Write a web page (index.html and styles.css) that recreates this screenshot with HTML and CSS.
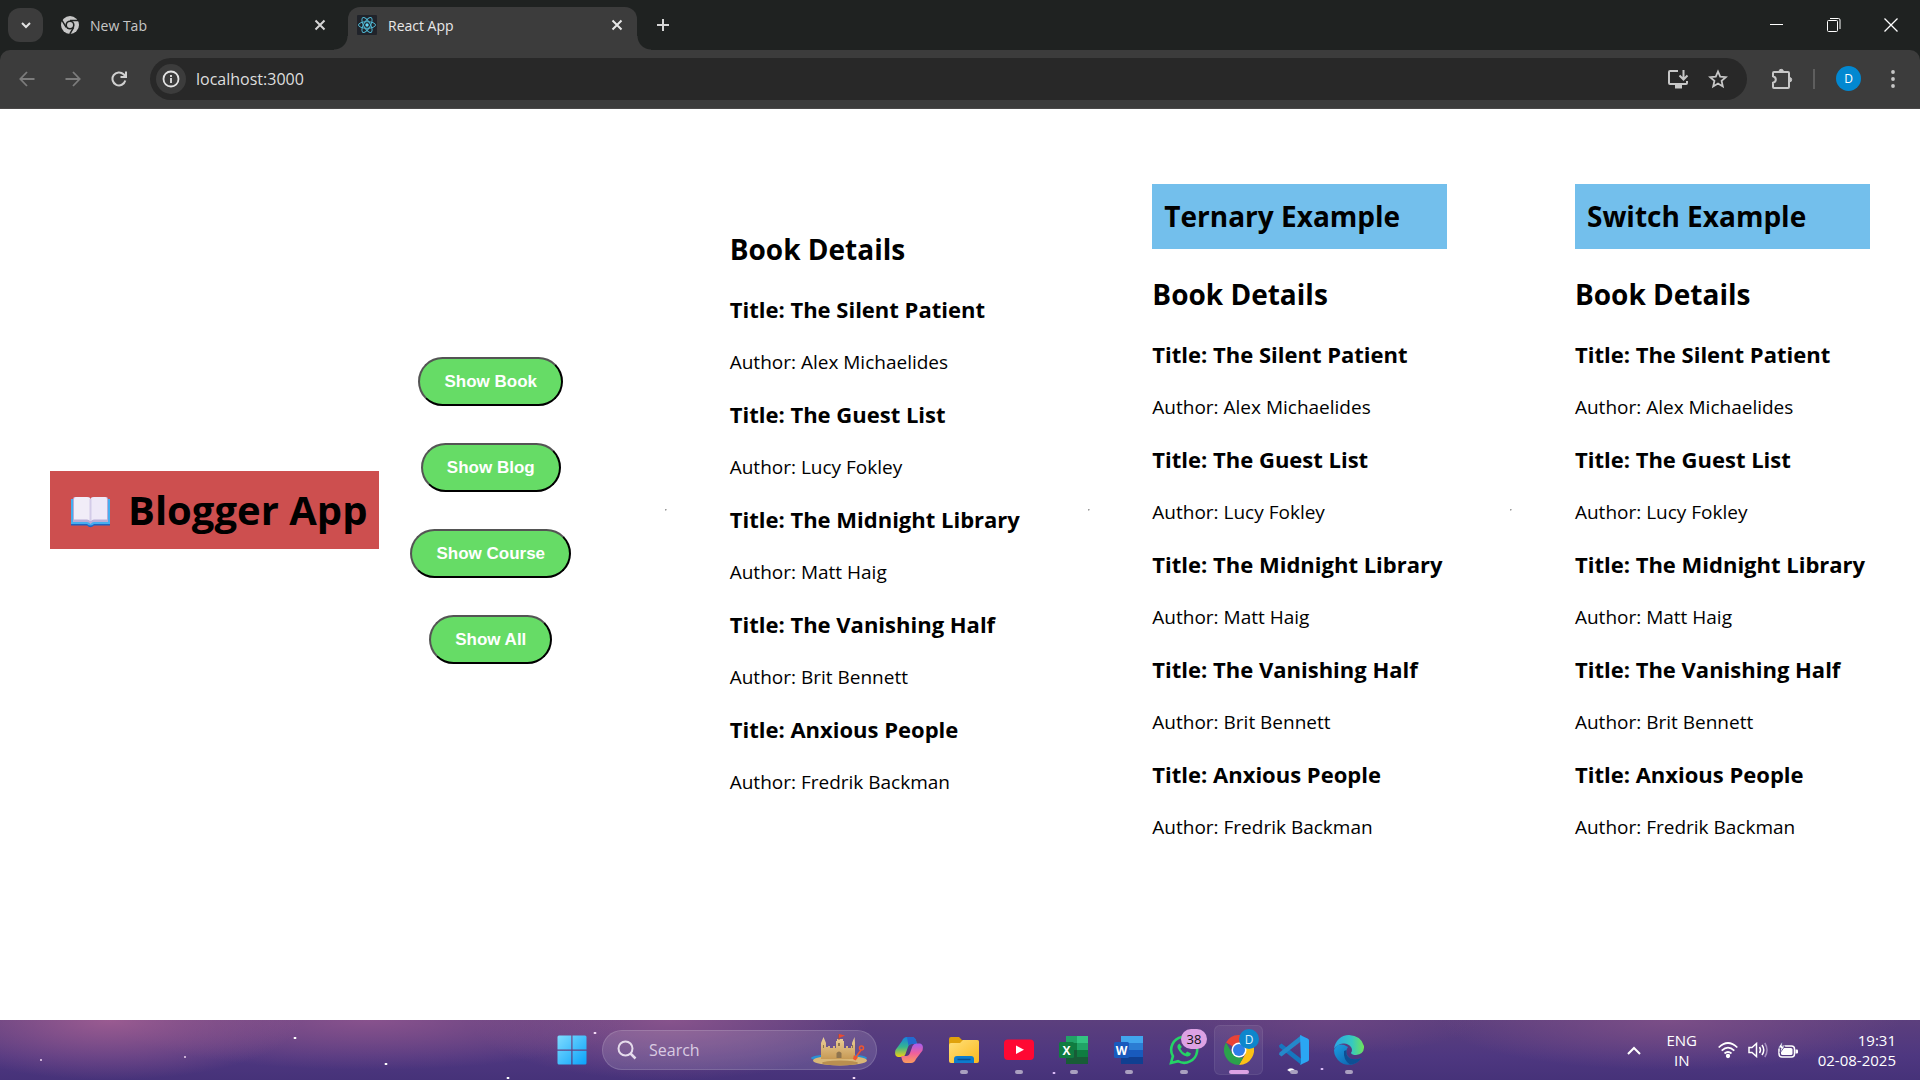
FILE: index.html
```html
<!DOCTYPE html>
<html lang="en">
<head>
<meta charset="utf-8">
<meta name="viewport" content="width=device-width, initial-scale=1">
<title>React App</title>
<link rel="stylesheet" href="styles.css">
</head>
<body>
<header class="tabstrip">
  <button class="tab-search" aria-label="Search tabs"><svg width="12" height="12" viewBox="0 0 12 12"><path d="M2 4l4 4 4-4" fill="none" stroke="#e3e3e3" stroke-width="2"/></svg></button>
  <div class="tab">
    <svg width="18" height="18" viewBox="0 0 18 18"><circle cx="9" cy="9" r="9" fill="#c7c7c7"/><circle cx="9" cy="9" r="4.6" fill="#1f2221"/><circle cx="9" cy="9" r="3" fill="#c7c7c7"/><path d="M9 4.6h8.2M5.2 11.3L1 4.4M12.7 11.3L8.8 18" stroke="#1f2221" stroke-width="1.5"/></svg>
    <span class="tab-title">New Tab</span>
    <button class="icon-btn tab-close" aria-label="Close New Tab"><svg width="12" height="12" viewBox="0 0 12 12"><path d="M1.500 1.500l9 9M10.500 1.500l-9 9" stroke="#d5d5d5" stroke-width="2"/></svg></button>
  </div>
  <div class="tab tab-active">
    <svg width="20" height="20" viewBox="0 0 20 20"><rect width="20" height="20" rx="1" fill="#20232a"/><g fill="none" stroke="#4fb6d1" stroke-width="1"><ellipse cx="10" cy="10" rx="8.500" ry="3.300"/><ellipse cx="10" cy="10" rx="8.500" ry="3.300" transform="rotate(60 10 10)"/><ellipse cx="10" cy="10" rx="8.500" ry="3.300" transform="rotate(120 10 10)"/></g><circle cx="10" cy="10" r="1.700" fill="#61dafb"/></svg>
    <span class="tab-title">React App</span>
    <button class="icon-btn tab-close" aria-label="Close React App"><svg width="12" height="12" viewBox="0 0 12 12"><path d="M1.500 1.500l9 9M10.500 1.500l-9 9" stroke="#e8e8e8" stroke-width="2"/></svg></button>
  </div>
  <button class="icon-btn new-tab" aria-label="New tab"><svg width="14" height="14" viewBox="0 0 14 14"><path d="M7 1v12M1 7h12" stroke="#d5d5d5" stroke-width="2"/></svg></button>
  <div class="window-controls">
    <button class="icon-btn" aria-label="Minimise"><svg width="14" height="14" viewBox="0 0 14 14"><path d="M0 6.500h13" stroke="#fff"/></svg></button>
    <button class="icon-btn" aria-label="Restore"><svg width="14" height="14" viewBox="0 0 14 14" fill="none" stroke="#fff"><rect x=".5" y="2.500" width="10" height="11" rx="1"/><path d="M3 .5h8.500q1.500 0 1.500 1.500v9"/></svg></button>
    <button class="icon-btn" aria-label="Close"><svg width="14" height="14" viewBox="0 0 14 14"><path d="M.5.5l13 13M13.500.5l-13 13" stroke="#fff" stroke-width="1.300"/></svg></button>
  </div>
</header>

<nav class="toolbar" aria-label="Browser toolbar">
  <div class="toolbar-inner">
    <button class="icon-btn nav-btn" aria-label="Back"><svg width="16" height="16" viewBox="0 0 16 16" fill="none" stroke="#7c7c7c" stroke-width="1.800"><path d="M15.500 8H1.500M8 1L1.300 8 8 15"/></svg></button>
    <button class="icon-btn nav-btn" aria-label="Forward"><svg width="16" height="16" viewBox="0 0 16 16" fill="none" stroke="#7c7c7c" stroke-width="1.800"><path d="M.5 8h14M8 1l6.700 7L8 15"/></svg></button>
    <button class="icon-btn nav-btn" aria-label="Reload"><svg width="16" height="16" viewBox="0 0 16 16" fill="none" stroke="#d0d0d0" stroke-width="2"><path d="M14.300 9.500A6.500 6.500 0 1 1 12.600 3.300L14.500 5.200"/><path d="M15 .5V6H9.500"/></svg></button>
    <div class="omnibox">
      <button class="icon-btn site-info" aria-label="Site information"><svg width="18" height="18" viewBox="0 0 18 18" fill="none" stroke="#e3e3e3" stroke-width="1.800"><circle cx="9" cy="9" r="7.500"/><path d="M9 8v5M9 5v2"/></svg></button>
      <input class="address" type="text" aria-label="Address" value="localhost:3000">
      <button class="icon-btn omni-btn" aria-label="Install app"><svg width="22" height="20" viewBox="0 0 22 20" fill="none" stroke="#c7c7c7" stroke-width="2"><path d="M11 2H3q-1 0-1 1v11q0 1 1 1h16q1 0 1-1v-2M16.500 1v9M12.500 6.500l4 4 4-4"/><path d="M8 17.500h7" stroke-width="4"/></svg></button>
      <button class="icon-btn omni-btn" aria-label="Bookmark"><svg width="20" height="20" viewBox="0 0 20 20" fill="none" stroke="#c7c7c7" stroke-width="1.800"><path d="M10 2.500l2.200 5.200 5.600.5-4.200 3.700 1.200 5.500-4.800-2.900-4.800 2.900 1.200-5.500-4.200-3.700 5.600-.5z"/></svg></button>
    </div>
    <button class="icon-btn ext-btn" aria-label="Extensions"><svg width="22" height="22" viewBox="0 0 22 22" fill="none" stroke="#c7c7c7" stroke-width="2"><path d="M3 4h14q1 0 1 1v14q0 1-1 1H3q-1 0-1-1v-4.200q2.800-.8 2.800-3.300T2 8.200V5q0-1 1-1z"/><path d="M8 3.500a2.200 2.200 0 0 1 4.400 0zM18.500 9.500a2.200 2.200 0 0 1 0 4.400z" fill="#c7c7c7" stroke-width="1"/></svg></button>
    <span class="divider"></span>
    <button class="avatar" aria-label="Profile">D</button>
    <button class="icon-btn menu-btn" aria-label="Menu"><svg width="4" height="18" viewBox="0 0 4 18" fill="#c7c7c7"><circle cx="2" cy="2" r="1.900"/><circle cx="2" cy="9" r="1.900"/><circle cx="2" cy="16" r="1.900"/></svg></button>
  </div>
</nav>

<main class="app">
  <h1 class="brand">
    <svg class="book-icon" width="58" height="40" viewBox="0 0 58 40"><path d="M9 9h39v26H32q-3.500 3-7 0H9z" fill="#45aef0"/><path d="M9 34h16q3.500 3 7 0h16v1.500H32q-3.500 3.500-7 0H9z" fill="#1f62c0"/><path d="M11 9q0-2 2-2h12q3 0 3.500 2Q29 7 32 7h12q2 0 2 2v23H32q-2 0-3.500 2Q27 32 25 32H11z" fill="#b9acd6"/><path d="M12 9q0-2 2-2h11q3 0 3.500 2v22Q27 29.500 25 29.500H12z" fill="#f1edf8"/><path d="M45 9q0-2-2-2H32q-3 0-3.500 2v22q1.500-1.500 3.500-1.500h13z" fill="#eee9f8"/><path d="M28.500 9v22" stroke="#d3cbe8" stroke-width="2"/></svg>
    <span>Blogger App</span>
  </h1>
  <div class="actions">
    <button class="pill">Show Book</button>
    <button class="pill">Show Blog</button>
    <button class="pill">Show Course</button>
    <button class="pill">Show All</button>
  </div>
  <hr>
  <section class="panel">
    <h2>Book Details</h2>
    <h3>Title: The Silent Patient</h3><p>Author: Alex Michaelides</p>
    <h3>Title: The Guest List</h3><p>Author: Lucy Fokley</p>
    <h3>Title: The Midnight Library</h3><p>Author: Matt Haig</p>
    <h3>Title: The Vanishing Half</h3><p>Author: Brit Bennett</p>
    <h3>Title: Anxious People</h3><p>Author: Fredrik Backman</p>
  </section>
  <hr>
  <section class="panel">
    <h2 class="banner">Ternary Example</h2>
    <h2>Book Details</h2>
    <h3>Title: The Silent Patient</h3><p>Author: Alex Michaelides</p>
    <h3>Title: The Guest List</h3><p>Author: Lucy Fokley</p>
    <h3>Title: The Midnight Library</h3><p>Author: Matt Haig</p>
    <h3>Title: The Vanishing Half</h3><p>Author: Brit Bennett</p>
    <h3>Title: Anxious People</h3><p>Author: Fredrik Backman</p>
  </section>
  <hr>
  <section class="panel">
    <h2 class="banner">Switch Example</h2>
    <h2>Book Details</h2>
    <h3>Title: The Silent Patient</h3><p>Author: Alex Michaelides</p>
    <h3>Title: The Guest List</h3><p>Author: Lucy Fokley</p>
    <h3>Title: The Midnight Library</h3><p>Author: Matt Haig</p>
    <h3>Title: The Vanishing Half</h3><p>Author: Brit Bennett</p>
    <h3>Title: Anxious People</h3><p>Author: Fredrik Backman</p>
  </section>
</main>

<footer class="taskbar">
  <svg width="0" height="0" class="defs" aria-hidden="true"><defs>
    <linearGradient id="win" x1="0" y1="0" x2="1" y2="1"><stop offset="0" stop-color="#7fdcff"/><stop offset="1" stop-color="#0aa2fa"/></linearGradient>
    <linearGradient id="cpA" x1="0" y1="0" x2="0" y2="1"><stop offset="0" stop-color="#1583e0"/><stop offset=".5" stop-color="#35b58f"/><stop offset="1" stop-color="#f3d011"/></linearGradient>
    <linearGradient id="cpB" x1="0" y1="0" x2="0" y2="1"><stop offset="0" stop-color="#a45cf0"/><stop offset=".5" stop-color="#f0609c"/><stop offset="1" stop-color="#fb9c5c"/></linearGradient>
    <linearGradient id="fold" x1="0" y1="0" x2="1" y2="1"><stop offset="0" stop-color="#ffe07a"/><stop offset="1" stop-color="#fbb91e"/></linearGradient>
    <linearGradient id="edgeA" x1="0" y1="0" x2="1" y2="0"><stop offset="0" stop-color="#2aa5e6"/><stop offset=".6" stop-color="#36c9c0"/><stop offset="1" stop-color="#6fe35a"/></linearGradient>
    <linearGradient id="edgeB" x1="0" y1="0" x2="1" y2="1"><stop offset="0" stop-color="#1b9de2"/><stop offset="1" stop-color="#0c59a4"/></linearGradient>
    <linearGradient id="sand" x1="0" y1="0" x2="0" y2="1"><stop offset="0" stop-color="#ecd09a"/><stop offset="1" stop-color="#c79a55"/></linearGradient>
  </defs></svg>
  <div class="dock">
    <button class="app-btn" aria-label="Start"><svg width="30" height="30" viewBox="0 0 30 30" fill="url(#win)"><path d="M2 .500h12.300v14H.500V2Q.500.500 2 .500zM15.500.500H28Q29.500.500 29.500 2v12.500h-14zM.500 15.700h13.800v13.800H2Q.500 29.500.500 28zM15.500 15.700h14V28q0 1.500-1.500 1.500H15.500z"/></svg></button>
    <label class="search">
      <svg width="20" height="20" viewBox="0 0 20 20" fill="none" stroke="#e6dcec" stroke-width="2"><circle cx="8.500" cy="8.500" r="7"/><path d="M13.500 13.500l5 5" stroke-width="2.500"/></svg>
      <input type="text" placeholder="Search" aria-label="Search">
      <svg width="60" height="32" viewBox="0 0 60 32"><ellipse cx="29" cy="24" rx="28" ry="4" fill="#2b8fd4"/><ellipse cx="30" cy="26.500" rx="27" ry="5" fill="#d9b777"/><ellipse cx="30" cy="29" rx="18" ry="2.500" fill="#b98f50"/><path d="M11 9l2.500-6L16 9v4h2v-1h2v2h3v-2h2v2h1V7h1V5h6v2h1v7h2v-2h2v2h3v-2h1V9l2.500-6L45 9v16H11z" fill="url(#sand)"/><path d="M26.500 24v-5q2.500-3 5 0v5z" fill="#8e744f"/><path d="M28 9h2v3h-2zM13 11h1v3h-1zM42 11h1v3h-1z" fill="#8e744f"/><path d="M29 6V0" stroke="#a94b2f"/><path d="M29 0l6 1.500L29 4z" fill="#ee4a2e"/><path d="M51 16l-5 7" stroke="#f0552f" stroke-width="1.500"/><circle cx="51.500" cy="14" r="2" fill="none" stroke="#f0552f" stroke-width="1.500"/><path d="M43 25l1-4 4 2.500-2.500 3z" fill="#f0552f"/></svg>
    </label>
    <button class="app-btn" aria-label="Copilot"><svg width="28" height="28" viewBox="0 0 28 28"><path d="M7 5q1.500-4 5-4h5q3 0 4 3.500L22 8h-5q-3 0-4 3l-2.500 7q-1 3-4 3H3Q-1 20 .500 14z" fill="url(#cpA)"/><path d="M12 1h5q3 0 4 3.500L22 8h-5q-2.500 0-3.500 2z" fill="#2469cf"/><path d="M21 23q-1.500 4-5 4h-5q-3 0-4-3.500L6 20h5q3 0 4-3l2.500-7q1-2.500 4-2.500H25q4 1 2.500 7z" fill="url(#cpB)"/></svg></button>
    <button class="app-btn running" aria-label="File Explorer"><svg width="30" height="28" viewBox="0 0 30 28"><path d="M0 3q0-2 2-2h8l3 3h15q2 0 2 2v10H0z" fill="#e0a20b"/><path d="M0 9q0-2 2-2h9l3-3h14q2 0 2 2v19q0 2-2 2H2q-2 0-2-2z" fill="url(#fold)"/><path d="M5 27v-4q0-3 3-3h14q3 0 3 3v4z" fill="#0d7ccd"/><path d="M8.500 23.500h13" stroke="#0a4f90" stroke-width="1.500"/></svg></button>
    <button class="app-btn running" aria-label="YouTube"><svg width="30" height="22" viewBox="0 0 30 22"><rect y=".5" width="30" height="20.500" rx="4" fill="#ff0833"/><path d="M12 6.500l8 4.200-8 4.300z" fill="#fff"/></svg></button>
    <button class="app-btn running" aria-label="Excel"><svg width="30" height="28" viewBox="0 0 30 28"><path d="M7 0h22v28H7z" fill="#185c37"/><path d="M7 0h11v7H7z" fill="#21a366"/><path d="M18 0h11v7H18z" fill="#33c481"/><path d="M7 7h11v7H7z" fill="#107c41"/><path d="M18 7h11v7H18z" fill="#21a366"/><path d="M18 14h11v7H18z" fill="#107c41"/><rect y="6" width="15" height="16" rx="1.500" fill="#107c41"/><text x="7.500" y="19" class="glyph">X</text></svg></button>
    <button class="app-btn running" aria-label="Word"><svg width="30" height="28" viewBox="0 0 30 28"><path d="M7 0h22v7H7z" fill="#41a5ee"/><path d="M7 7h22v7H7z" fill="#2b7cd3"/><path d="M7 14h22v7H7z" fill="#185abd"/><path d="M7 21h22v7H7z" fill="#103f91"/><rect y="6" width="15" height="16" rx="1.500" fill="#185abd"/><text x="7.500" y="19" class="glyph">W</text></svg></button>
    <button class="app-btn running" aria-label="WhatsApp"><svg width="30" height="30" viewBox="0 0 30 30"><path d="M2 28l1.900-6.800A13 13 0 1 1 9 26.200z" fill="none" stroke="#25d366" stroke-width="2.600"/><path d="M10.500 8.500q-3 1.500-1.700 5 3 6.500 9 8 3.500.3 4.200-3l-3.800-2-1.800 2q-3.300-1.500-5-4.800l1.500-1.700z" fill="#25d366"/></svg><span class="badge badge-count">38</span></button>
    <button class="app-btn running current" aria-label="Chrome"><svg width="30" height="30" viewBox="0 0 30 30"><path d="M15 15L2 7.500A15 15 0 0 1 28 7.500H15z" fill="#ea4335"/><path d="M15 7.500h13A15 15 0 0 1 15 30l6.500-11.300z" fill="#fbc116"/><path d="M2 7.500L8.500 18.700 15 22.500h4.300L15 30A15 15 0 0 1 2 7.500z" fill="#2ba24c"/><circle cx="15" cy="15" r="7.500" fill="#fff"/><circle cx="15" cy="15" r="6" fill="#2f7de9"/></svg><span class="badge badge-profile">D</span></button>
    <button class="app-btn running" aria-label="Visual Studio Code"><svg width="30" height="30" viewBox="0 0 30 30"><path d="M0 10.500l2.500-2 20 15.500V30L.500 12.500z" fill="#1677c0"/><path d="M0 19.500l2.500 2 20-15.500V0L.500 17.500z" fill="#2489ca"/><path d="M21 0l7.500 3.500q1.500.7 1.500 2v19q0 1.300-1.500 2L21 30l1-2z" fill="#2ba6f3"/></svg></button>
    <button class="app-btn running" aria-label="Edge"><svg width="30" height="30" viewBox="0 0 30 30"><path d="M0 15A15 15 0 0 0 20 29q5-2 7.500-6-12 4-15-4-1-4 1.500-7Q4 6 0 15z" fill="url(#edgeB)"/><path d="M0 14C1 6 7 0 15 0q12 .5 15 11 .500 8-8 9-4 0-5-2 2-3 0-6-3-4-8-3.500Q3 9 0 14z" fill="url(#edgeA)"/><path d="M10 16q-1 9 6 13.500 7-.5 11.500-6.500-7 2.500-12 0-4-3-3-8z" fill="#0e4f94"/></svg></button>
  </div>
  <div class="tray">
    <button class="icon-btn chevron" aria-label="Show hidden icons"><svg width="14" height="9" viewBox="0 0 14 9"><path d="M1 8l6-6 6 6" fill="none" stroke="#fff" stroke-width="2"/></svg></button>
    <button class="lang">ENG<br>IN</button>
    <button class="status" aria-label="Network, volume and battery">
      <svg width="20" height="18" viewBox="0 0 20 18" fill="none" stroke="#fff" stroke-width="1.700"><path d="M.7 6.500q9.300-9 18.600 0M3.700 9.700q6.300-6 12.600 0M6.500 12.500q3.500-3 7 0"/><circle cx="10" cy="15" r="1.300" fill="#fff"/></svg>
      <svg width="20" height="16" viewBox="0 0 20 16" fill="none" stroke="#fff" stroke-width="1.500"><path d="M1 5.500h3L8.500 1.500v13L4 10.500H1z"/><path d="M11.500 5q2 3 0 6M14 3q3.500 5 0 10"/><path d="M16.800 1q4.500 7 0 14" stroke="#a48dbd"/></svg>
      <svg width="20" height="18" viewBox="0 0 20 18"><rect x="1" y="5" width="15.500" height="11" rx="3" fill="none" stroke="#fff" stroke-width="1.500"/><rect x="3" y="7" width="11.500" height="7" rx="1.500" fill="#fff"/><path d="M17.500 8.500h1.500q1 0 1 1v2q0 1-1 1h-1.500z" fill="#fff"/><path d="M4.500 0L0 7h3l-1 5 5-7H4z" fill="#fff" stroke="#4d3b80" stroke-width=".8"/></svg>
    </button>
    <button class="clock">19:31<br>02-08-2025</button>
  </div>
</footer>
</body>
</html>
```
FILE: styles.css
```css
* { box-sizing: border-box; }

body {
  margin: 0;
  min-height: 100vh;
  display: flex;
  flex-direction: column;
  background: #fff;
  color: #000;
  font-family: "Open Sans", "Noto Sans", sans-serif;
}

button, input { font-family: inherit; }

svg { display: block; flex: none; }

.icon-btn {
  display: flex;
  align-items: center;
  justify-content: center;
  padding: 0;
  border: 0;
  background: none;
}

/* Tab strip */
.tabstrip {
  display: flex;
  align-items: stretch;
  height: 50px;
  padding: 0 1px 0 8px;
  background: #1f2221;
}

.tab-search {
  display: flex;
  align-items: center;
  justify-content: center;
  align-self: center;
  width: 35px;
  height: 34px;
  padding: 0;
  border: 0;
  border-radius: 12px;
  background: #3c3c3c;
}

.tab {
  display: flex;
  align-items: center;
  gap: 11px;
  width: 289px;
  margin-top: 7px;
  padding: 0 10px 7px;
  border-radius: 12px 12px 0 0;
  color: #c7c7c7;
  font-size: 14px;
}

.tab:not(.tab-active) {
  margin-left: 8px;
  width: 297px;
}

.tab-active {
  position: relative;
  padding-left: 9px;
  background: #3c3c3c;
  color: #e8e8e8;
}

/* Curved feet of the active tab */
.tab-active::before,
.tab-active::after {
  content: "";
  position: absolute;
  bottom: 0;
  width: 14px;
  height: 14px;
}

.tab-active::before {
  right: 100%;
  background: radial-gradient(circle at 0 0, transparent 13px, #3c3c3c 14px);
}

.tab-active::after {
  left: 100%;
  background: radial-gradient(circle at 100% 0, transparent 13px, #3c3c3c 14px);
}

.tab-title { flex: 1; }

.tab-close { width: 20px; height: 20px; }

.tab:not(.tab-active) .tab-close { margin-right: 8px; }

.new-tab { width: 52px; }

.window-controls {
  display: flex;
  margin-left: auto;
}

.window-controls .icon-btn { width: 57px; }

/* Toolbar */
.toolbar { background: #1f2221; }

.toolbar-inner {
  display: flex;
  align-items: center;
  height: 59px;
  padding: 0 11px 1px 4px;
  border-bottom: 1px solid #4a4848;
  border-radius: 10px 10px 0 0;
  background: #3c3c3c;
}

.nav-btn { width: 46px; height: 40px; }

.omnibox {
  display: flex;
  align-items: center;
  flex: 1;
  height: 42px;
  margin-left: 8px;
  padding: 0 9px 0 6px;
  border-radius: 21px;
  background: #282828;
}

.site-info {
  width: 30px;
  height: 30px;
  border-radius: 50%;
  background: #3c3c3c;
}

.address {
  flex: 1;
  min-width: 0;
  padding: 0 10px;
  border: 0;
  background: none;
  color: #dedede;
  font-size: 16px;
}

.omni-btn { width: 40px; height: 40px; }

.ext-btn { width: 40px; height: 40px; margin-left: 15px; }

.divider {
  width: 2px;
  height: 20px;
  margin: 0 21px 0 11px;
  background: #5e5e5e;
}

.avatar {
  width: 25px;
  height: 25px;
  padding: 0;
  border: 0;
  border-radius: 50%;
  background: #0288d1;
  color: #fff;
  font-size: 12px;
}

.menu-btn { width: 32px; height: 40px; margin-left: 16px; }

/* Page */
.app {
  display: flex;
  align-items: center;
  padding: 50px;
}

.app hr {
  margin: 0 auto;
  border: 1px solid;
  border-color: #9a9a9a #eee #eee #9a9a9a;
}

.brand {
  display: flex;
  align-items: center;
  margin: 0;
  padding: 12px;
  background: #cd4f4f;
  font-size: 40px;
  line-height: 54px;
  white-space: nowrap;
}

.book-icon { margin-right: 8px; }

.actions {
  display: flex;
  flex-direction: column;
  align-items: center;
  gap: 37px;
  margin: 0 31px;
}

.pill {
  padding: 13px 24px;
  border: 2px outset #000;
  border-radius: 25px;
  background: #66dc66;
  color: #fff;
  font: bold 17px/19px "Liberation Sans", Arial, sans-serif;
}

.panel {
  flex: none;
  width: 295px;
}

.panel h2 {
  margin: 25px 0;
  font-size: 28px;
  line-height: 40px;
}

.panel .banner {
  padding: 12px 12px 13px;
  background: #73bfec;
}

.panel h3 {
  margin: 23px 0 24px;
  font-size: 22px;
  line-height: 31px;
  white-space: nowrap;
}

.panel p {
  margin: 23px 0;
  font-size: 19px;
  line-height: 27px;
}

.panel p:last-child { margin-bottom: 20px; }

/* Taskbar */
.taskbar {
  display: grid;
  grid-template-columns: 1fr auto 1fr;
  align-items: center;
  height: 60px;
  margin-top: auto;
  background:
    radial-gradient(2px 1px at 295px 18px, #fff 60%, transparent),
    radial-gradient(1px 1px at 185px 37px, #f3d9f5 60%, transparent),
    radial-gradient(1px 1px at 41px 40px, #f3d9f5 60%, transparent),
    radial-gradient(2px 1px at 386px 44px, #fff 60%, transparent),
    radial-gradient(2px 1px at 508px 58px, #fff 60%, transparent),
    radial-gradient(2px 1px at 595px 13px, #f3d9f5 60%, transparent),
    radial-gradient(2px 1px at 854px 58px, #f3d9f5 60%, transparent),
    radial-gradient(2px 1px at 1054px 53px, #d9b9f5 60%, transparent),
    radial-gradient(4px 2px at 1291px 50px, #fff 60%, transparent),
    radial-gradient(2px 1px at 1322px 49px, #d9b9f5 60%, transparent),
    radial-gradient(ellipse 190px 60px at 110px 0, #9a5b91, transparent),
    radial-gradient(ellipse 260px 50px at 370px 0, #88528d, transparent),
    radial-gradient(ellipse 200px 60px at 670px 0, #87538c, transparent),
    radial-gradient(ellipse 150px 34px at 1330px 0, #6a4482, transparent),
    radial-gradient(ellipse 230px 50px at 1670px 0, #7b4e87, transparent),
    linear-gradient(#5c3f7d, #4e3780 60%, #463279);
  color: #fff;
}

.defs { position: absolute; }

.dock {
  display: flex;
  align-items: center;
  grid-column: 2;
}

.app-btn {
  position: relative;
  display: flex;
  align-items: center;
  justify-content: center;
  width: 49px;
  height: 50px;
  margin: 0 3px;
  padding: 0;
  border: 1px solid transparent;
  border-radius: 6px;
  background: none;
}

.current {
  border-color: #ffffff12;
  background: #ffffff10;
}

/* Marker under an open app */
.running::after {
  content: "";
  position: absolute;
  bottom: 0;
  width: 8px;
  height: 4px;
  border-radius: 2px;
  background: #aaa0c0;
}

.current::after {
  width: 20px;
  background: #dda2e4;
}

.glyph {
  fill: #fff;
  font: bold 12px "Open Sans", sans-serif;
  text-anchor: middle;
}

.badge {
  position: absolute;
  display: flex;
  align-items: center;
  justify-content: center;
  height: 20px;
  border-radius: 10px;
}

.badge-count {
  top: 3px;
  right: 0;
  width: 26px;
  background: #dda2e4;
  color: #111;
  font-size: 13px;
}

.badge-profile {
  top: 3px;
  right: 3px;
  width: 20px;
  background: #0e86cc;
  color: #dff1ff;
  font-size: 12px;
}

.search {
  display: flex;
  align-items: center;
  width: 275px;
  height: 40px;
  margin: 0 4px 0 3px;
  padding: 0 6px 0 14px;
  border: 1px solid #ffffff24;
  border-radius: 20px;
  background: #ffffff20;
}

.search input {
  flex: 1;
  min-width: 0;
  padding: 0 12px;
  border: 0;
  background: none;
  color: #fff;
  font-size: 16px;
}

.search input::placeholder { color: #d9cbe2; }

.tray {
  display: flex;
  align-items: center;
  justify-content: flex-end;
  padding-right: 24px;
}

.chevron { width: 32px; height: 40px; }

.lang, .clock, .status {
  padding: 0;
  border: 0;
  background: none;
  color: #fff;
  font-size: 15px;
  line-height: 20px;
}

.lang { width: 64px; }

.status {
  display: flex;
  align-items: center;
  gap: 10px;
  margin-left: 4px;
}

.clock { margin-left: 20px; text-align: right; }
```
